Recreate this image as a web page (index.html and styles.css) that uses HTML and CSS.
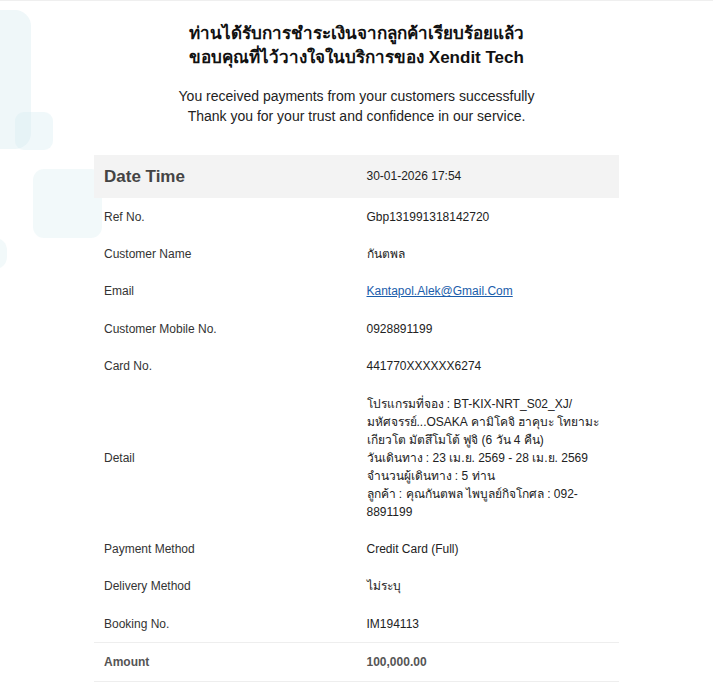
FILE: index.html
```html
<!DOCTYPE html>
<html lang="th">
<head>
<meta charset="utf-8">
<title>Payment received</title>
<link rel="stylesheet" href="styles.css">
</head>
<body>
<div class="topline"></div>
<div class="deco">
  <div class="shape s1"></div>
  <div class="shape s2"></div>
  <div class="shape s3"></div>
  <div class="shape s4"></div>
</div>
<main class="page">
  <h1 class="title">ท่านได้รับการชำระเงินจากลูกค้าเรียบร้อยแล้ว<br>ขอบคุณที่ไว้วางใจในบริการของ Xendit Tech</h1>
  <p class="subtitle">You received payments from your customers successfully<br>Thank you for your trust and confidence in our service.</p>
  <table class="details">
    <tr class="head">
      <th>Date Time</th>
      <td>30-01-2026 17:54</td>
    </tr>
    <tr><th>Ref No.</th><td>Gbp131991318142720</td></tr>
    <tr><th>Customer Name</th><td>กันตพล</td></tr>
    <tr><th>Email</th><td><a href="#">Kantapol.Alek@Gmail.Com</a></td></tr>
    <tr><th>Customer Mobile No.</th><td>0928891199</td></tr>
    <tr><th>Card No.</th><td>441770XXXXXX6274</td></tr>
    <tr><th>Detail</th><td>โปรแกรมที่จอง : BT-KIX-NRT_S02_XJ/<br>มหัศจรรย์...OSAKA คามิโคจิ ฮาคุบะ โทยามะ<br>เกียวโต มัตสึโมโต้ ฟูจิ (6 วัน 4 คืน)<br>วันเดินทาง : 23 เม.ย. 2569 - 28 เม.ย. 2569<br>จำนวนผู้เดินทาง : 5 ท่าน<br>ลูกค้า : คุณกันตพล ไพบูลย์กิจโกศล : 092-<br>8891199</td></tr>
    <tr><th>Payment Method</th><td>Credit Card (Full)</td></tr>
    <tr><th>Delivery Method</th><td>ไม่ระบุ</td></tr>
    <tr><th>Booking No.</th><td>IM194113</td></tr>
    <tr class="total"><th>Amount</th><td>100,000.00</td></tr>
  </table>
</main>
</body>
</html>
```
FILE: styles.css
```css
html, body {
  margin: 0;
  padding: 0;
  background: #ffffff;
}
body {
  font-family: "Liberation Sans", Arial, "Noto Sans", sans-serif;
  color: #222;
  position: relative;
  min-height: 686px;
  overflow: hidden;
}
.topline {
  height: 1px;
  background: #efefef;
}
.deco {
  position: absolute;
  left: 0;
  top: 0;
  width: 120px;
  height: 300px;
  z-index: 0;
}
.shape {
  position: absolute;
}
.s1 {
  left: -40px;
  top: 10px;
  width: 71px;
  height: 139px;
  border-radius: 16px;
  background: rgba(214, 236, 240, 0.4);
}
.s2 {
  left: 15px;
  top: 112px;
  width: 38px;
  height: 38px;
  border-radius: 9px;
  background: rgba(214, 236, 240, 0.36);
}
.s3 {
  left: 33px;
  top: 169px;
  width: 69px;
  height: 69px;
  border-radius: 11px;
  background: rgba(220, 239, 242, 0.36);
}
.s4 {
  left: -30px;
  top: 238px;
  width: 37px;
  height: 31px;
  border-radius: 12px;
  background: rgba(220, 239, 242, 0.36);
}
.page {
  position: relative;
  z-index: 1;
  width: 525px;
  margin: 0 auto;
  padding-top: 21px;
}
.title {
  margin: 0;
  text-align: center;
  font-size: 17px;
  line-height: 24px;
  font-weight: bold;
  color: #111;
}
.subtitle {
  margin: 16px 0 0;
  text-align: center;
  font-size: 14px;
  line-height: 20px;
  color: #222;
}
.details {
  width: 525px;
  margin-top: 29px;
  border-collapse: collapse;
  table-layout: fixed;
  font-size: 12px;
}
.details th,
.details td {
  width: 50%;
  text-align: left;
  vertical-align: middle;
  font-weight: normal;
  padding: 9.7px 9px 9.7px 10px;
  line-height: 18px;
  color: #333;
}
.details td {
  color: #222;
}
.details a {
  color: #1a5dab;
  text-decoration: underline;
}
.details .head th,
.details .head td {
  background: #f3f3f3;
  padding-top: 10px;
  padding-bottom: 10px;
  line-height: 23px;
}
.details .head th {
  font-size: 17px;
  font-weight: bold;
  color: #444;
}
.details .total th,
.details .total td {
  border-top: 1px solid #eeeeee;
  border-bottom: 1px solid #eeeeee;
  font-weight: bold;
  color: #555;
}
```
